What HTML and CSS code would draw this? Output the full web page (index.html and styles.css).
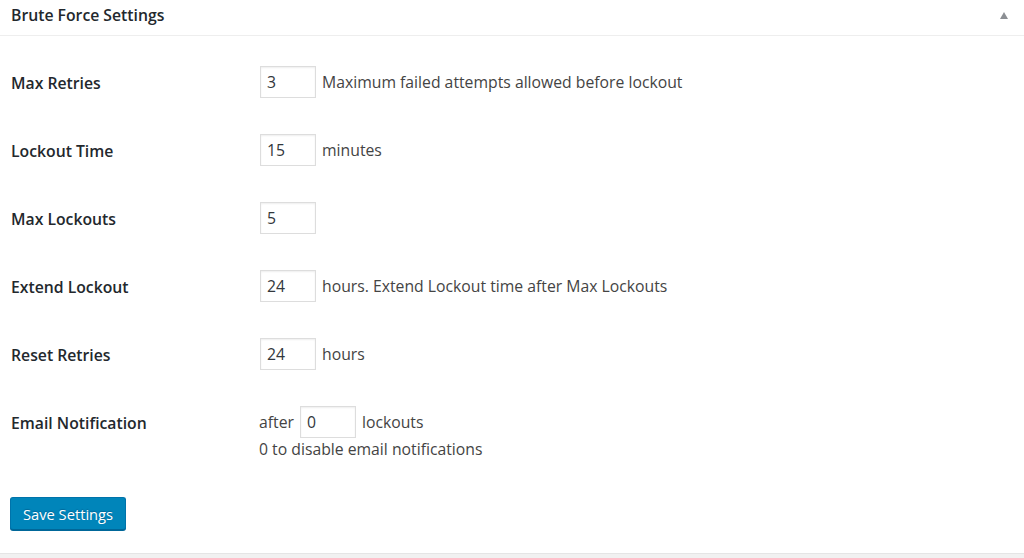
FILE: index.html
```html
<!DOCTYPE html>
<html lang="en">
<head>
  <meta charset="UTF-8">
  <title>Brute Force Settings</title>
  <link rel="stylesheet" href="styles.css">
</head>
<body>
  <div class="postbox">
    <div class="postbox-header">
      <h2>Brute Force Settings</h2>
      <span class="toggle-arrow"></span>
    </div>

    <form class="inside">
      <div class="form-row">
        <label class="row-label">Max Retries</label>
        <div class="row-field">
          <input type="text" class="small-input" value="3">
          <span>Maximum failed attempts allowed before lockout</span>
        </div>
      </div>

      <div class="form-row">
        <label class="row-label">Lockout Time</label>
        <div class="row-field">
          <input type="text" class="small-input" value="15">
          <span>minutes</span>
        </div>
      </div>

      <div class="form-row">
        <label class="row-label">Max Lockouts</label>
        <div class="row-field">
          <input type="text" class="small-input" value="5">
        </div>
      </div>

      <div class="form-row">
        <label class="row-label">Extend Lockout</label>
        <div class="row-field">
          <input type="text" class="small-input" value="24">
          <span>hours. Extend Lockout time after Max Lockouts</span>
        </div>
      </div>

      <div class="form-row">
        <label class="row-label">Reset Retries</label>
        <div class="row-field">
          <input type="text" class="small-input" value="24">
          <span>hours</span>
        </div>
      </div>

      <div class="form-row">
        <label class="row-label">Email Notification</label>
        <div class="row-field stacked">
          <div class="inline">
            <span>after</span>
            <input type="text" class="small-input" value="0">
            <span>lockouts</span>
          </div>
          <p class="description">0 to disable email notifications</p>
        </div>
      </div>

      <div class="submit">
        <button type="button" class="button-primary">Save Settings</button>
      </div>
    </form>
  </div>
</body>
</html>
```

FILE: styles.css
```css
body {
  margin: 0;
  padding: 0;
  background-color: #f1f1f1;
  font-family: "Open Sans", sans-serif;
  font-size: 15.75px;
  color: #444;
}

.postbox {
  background-color: #fff;
  border-bottom: 1px solid #e5e5e5;
  height: 554px;
  box-sizing: border-box;
}

.postbox-header {
  display: flex;
  align-items: center;
  justify-content: space-between;
  height: 36px;
  box-sizing: border-box;
  padding: 0 16px 0 11px;
  border-bottom: 1px solid #eee;
}

.postbox-header h2 {
  margin: 0;
  font-size: 15.75px;
  font-weight: 600;
  color: #23282d;
  line-height: 1;
  padding-bottom: 3px;
}

.toggle-arrow {
  width: 0;
  height: 0;
  border-left: 4px solid transparent;
  border-right: 4px solid transparent;
  border-bottom: 7px solid #8c8f94;
  margin-bottom: 5px;
}

.inside {
  padding: 12px 10px 0 11px;
  margin: 0;
}

.form-row {
  display: grid;
  grid-template-columns: 249px 1fr;
  align-items: start;
  padding: 18px 0;
}

.row-label {
  font-weight: 600;
  color: #23282d;
  line-height: 32px;
  margin-top: 1px;
  margin-bottom: -1px;
}

.row-field {
  display: flex;
  align-items: center;
  gap: 6px;
  line-height: 32px;
}

.row-field.stacked {
  flex-direction: column;
  align-items: flex-start;
  gap: 0;
  margin-left: -1px;
}

.inline {
  display: flex;
  align-items: center;
  gap: 6px;
}

.small-input {
  width: 56px;
  height: 32px;
  box-sizing: border-box;
  padding: 0 6px;
  border: 1px solid #ddd;
  box-shadow: inset 0 1px 2px rgba(0, 0, 0, 0.07);
  font-family: "Open Sans", sans-serif;
  font-size: 15.75px;
  color: #32373c;
  background-color: #fff;
  outline: none;
}

.description {
  margin: 0;
  line-height: 22px;
  color: #444;
}

.submit {
  padding-top: 19px;
}

.button-primary {
  height: 33px;
  margin-left: -1px;
  padding: 0 12px;
  font-family: "Open Sans", sans-serif;
  font-size: 14.7px;
  color: #fff;
  background-color: #0085ba;
  border: 1px solid #0073aa;
  border-bottom-color: #006799;
  border-radius: 3px;
  box-shadow: 0 1px 0 #006799;
  text-shadow: 0 -1px 1px #006799;
  cursor: pointer;
}
```
